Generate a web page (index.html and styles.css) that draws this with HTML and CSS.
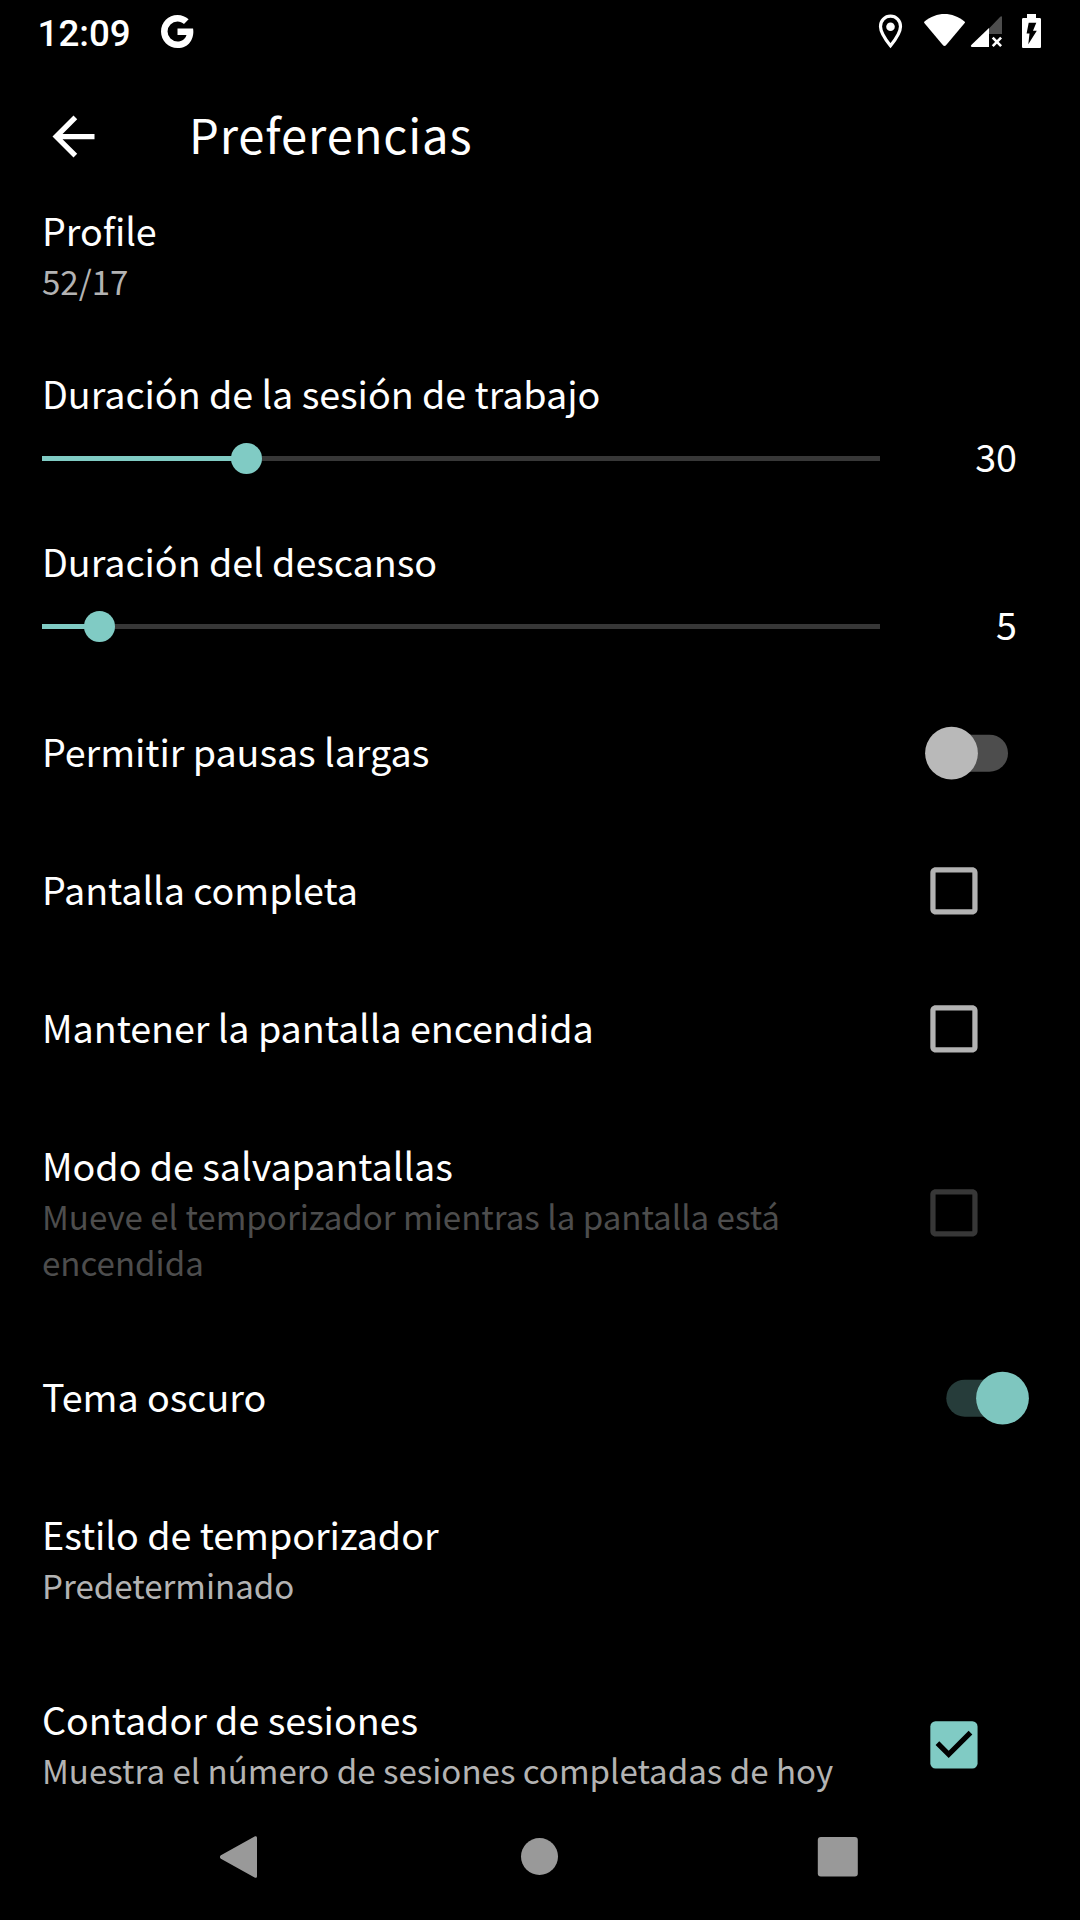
FILE: index.html
```html
<!DOCTYPE html>
<html lang="es">
<head>
<meta charset="utf-8">
<title>Preferencias</title>
<link rel="stylesheet" href="styles.css">
</head>
<body>
<div class="screen">
  <header class="status">
    <span class="clock">12:09</span>
    <svg class="google" viewBox="2.54 2 19.7 20"><path d="M12.545 10.239v3.821h5.445c-.712 2.315-2.647 3.972-5.445 3.972a6.032 6.032 0 1 1 0-12.064c1.498 0 2.866.549 3.921 1.453l2.814-2.814C17.503 2.988 15.139 2 12.545 2 7.021 2 2.543 6.477 2.543 12s4.478 10 10.002 10c8.396 0 10.249-7.850 9.426-11.748z"/></svg>
    <svg class="status-icons" viewBox="876 0 168 63">
      <path d="M890.500 16.200c-5.600 0-10 4.400-10 10.300 0 6.500 6.300 14.700 10 19.300 3.700-4.600 10-12.800 10-19.300 0-5.900-4.400-10.300-10-10.300z" fill="none" stroke="#fff" stroke-width="3.200"/>
      <circle cx="890.500" cy="26.700" r="4.300"/>
      <path d="M924.500 21.500c12-10 28-10 40 0 .6.500.6 1.100.2 1.600L946 45.200c-.8.900-2.200.9-3 0L924.300 23.100c-.4-.500-.3-1.100.2-1.600z"/>
      <path d="M1002 17v17h-13V28.500l11-11.500c.8-.9 2-1 2 0z" fill="#4d4d4d"/>
      <path d="M989 28v19h-17c-1.300 0-1.500-1.200-.7-2z"/>
      <path d="M992.700 37.700l8.400 8.400m0-8.400l-8.400 8.400" stroke="#fff" stroke-width="2.600"/>
      <path d="M1027 14h9v4h3.500c1 0 1.500.5 1.500 1.500v27c0 1-.5 1.500-1.500 1.500h-16c-1 0-1.500-.5-1.500-1.500v-27c0-1 .5-1.500 1.500-1.500h3.500z"/>
      <path d="M1028.700 22.700h7.600l-3.300 8.100h3.800l-8.500 13.500 1.200-10.800h-2.900z" fill="#000"/>
    </svg>
  </header>
  <div class="toolbar">
    <svg class="icon" viewBox="0 0 24 24"><path d="M20 11H7.830l5.590-5.590L12 4l-8 8 8 8 1.410-1.410L7.830 13H20z"/></svg>
    <h1>Preferencias</h1>
  </div>
  <main class="list">
    <div class="row two-line">
      <div class="text"><div class="title">Profile</div><div class="summary">52/17</div></div>
    </div>
    <div class="slider-row">
      <div class="title">Duración de la sesión de trabajo</div>
      <div class="slider-line">
        <div class="slider"><div class="fill" style="width: 204.500px"></div><div class="thumb"></div></div>
        <div class="value">30</div>
      </div>
    </div>
    <div class="slider-row">
      <div class="title">Duración del descanso</div>
      <div class="slider-line">
        <div class="slider"><div class="fill" style="width: 57.500px"></div><div class="thumb"></div></div>
        <div class="value">5</div>
      </div>
    </div>
    <div class="row">
      <div class="text"><div class="title">Permitir pausas largas</div></div>
      <svg class="switch" viewBox="0 0 104 54"><rect x="21.300" y="8.700" width="61.700" height="37" rx="18.500" fill="#4d4d4d"/><circle cx="26.500" cy="27.200" r="26.400" fill="#b9b9b9"/></svg>
    </div>
    <div class="row">
      <div class="text"><div class="title">Pantalla completa</div></div>
      <svg class="check" viewBox="-.17 -.17 24.380 24.380"><path d="M19 5v14H5V5h14m0-2H5c-1.100 0-2 .9-2 2v14c0 1.100.9 2 2 2h14c1.100 0 2-.9 2-2V5c0-1.100-.9-2-2-2z"/></svg>
    </div>
    <div class="row">
      <div class="text"><div class="title">Mantener la pantalla encendida</div></div>
      <svg class="check" viewBox="-.17 -.17 24.380 24.380"><path d="M19 5v14H5V5h14m0-2H5c-1.100 0-2 .9-2 2v14c0 1.100.9 2 2 2h14c1.100 0 2-.9 2-2V5c0-1.100-.9-2-2-2z"/></svg>
    </div>
    <div class="row three-line">
      <div class="text"><div class="title">Modo de salvapantallas</div><div class="summary disabled">Mueve el temporizador mientras la pantalla está encendida</div></div>
      <svg class="check check-disabled" viewBox="-.17 -.17 24.380 24.380"><path d="M19 5v14H5V5h14m0-2H5c-1.100 0-2 .9-2 2v14c0 1.100.9 2 2 2h14c1.100 0 2-.9 2-2V5c0-1.100-.9-2-2-2z"/></svg>
    </div>
    <div class="row">
      <div class="text"><div class="title">Tema oscuro</div></div>
      <svg class="switch" viewBox="0 0 104 54"><rect x="21.300" y="8.700" width="61.700" height="37" rx="18.500" fill="#263c3a"/><circle cx="77.500" cy="27.200" r="26.400" fill="#7ec6bf"/></svg>
    </div>
    <div class="row two-line">
      <div class="text"><div class="title">Estilo de temporizador</div><div class="summary">Predeterminado</div></div>
    </div>
    <div class="row two-line last">
      <div class="text"><div class="title">Contador de sesiones</div><div class="summary">Muestra el número de sesiones completadas de hoy</div></div>
      <svg class="check check-on" viewBox="-.17 -.17 24.380 24.380"><rect x="3" y="3" width="18" height="18" rx="2"/><path d="M10 17l-5-5 1.410-1.410L10 14.170l7.590-7.590L19 8z" fill="#000"/></svg>
    </div>
  </main>
  <nav class="navbar">
    <svg viewBox="0 0 44 44"><path d="M38 1.800v38.400c0 1.400-1.200 2.100-2.400 1.300L1.900 22.700c-1.300-.8-1.300-2.600 0-3.400L35.600.5c1.200-.8 2.400-.1 2.400 1.300z"/></svg>
    <svg viewBox="0 0 44 44"><circle cx="21.500" cy="20.500" r="18.500"/></svg>
    <svg viewBox="0 0 44 44"><rect x="1.800" y="1" width="40" height="39.600" rx="3"/></svg>
  </nav>
</div>
</body>
</html>
```
FILE: styles.css
```css
* { box-sizing: border-box; }

body {
  margin: 0;
  background: #000;
  color: #fff;
  font-family: "Noto Sans CJK SC", sans-serif;
}

svg { display: block; flex: none; fill: #fff; }

.screen {
  display: flex;
  flex-direction: column;
  width: 1080px;
  height: 1920px;
  overflow: hidden;
}

.status {
  display: flex;
  align-items: center;
  flex: none;
  height: 63px;
  padding: 0 36px 0 37.500px;
}

.clock { width: 123.500px; padding-top: 5px; font: 500 36.750px/1 Roboto, sans-serif; }
.google { width: 32.500px; height: 33px; }
.status-icons { width: 168px; height: 63px; margin-left: auto; }

.icon { width: 63px; height: 63px; }

.toolbar {
  display: flex;
  align-items: center;
  flex: none;
  height: 100.500px;
  padding: 46.500px 0 0 42px;
}

h1 {
  margin: 0 0 0 84px;
  padding-bottom: 5px;
  font-size: 47.200px;
  font-weight: 400;
  line-height: 54px;
  letter-spacing: .85px;
}

.list { flex: 1; min-height: 0; overflow: hidden; }

.row {
  display: flex;
  align-items: center;
  justify-content: space-between;
  height: 138px;
  padding: 0 51px 0 42px;
}

.two-line { height: 184.500px; }
.three-line { height: 231px; }
.last { height: 186px; }
.text { width: 800px; }

.title {
  padding-bottom: 6px;
  font-size: 37.700px;
  line-height: 47px;
  letter-spacing: -.06px;
  white-space: nowrap;
}

.summary {
  margin: -1px 0 1px;
  font-size: 33.100px;
  line-height: 46px;
  color: #b3b3b3;
}

.disabled { color: #4d4d4d; }

.slider-row { height: 168px; padding: 20px 63px 0 42px; }
.slider-row .title { height: 59px; padding: 4px 0 0; line-height: 41px; }

.slider-line {
  display: flex;
  align-items: center;
  justify-content: space-between;
  height: 63px;
}

.slider {
  display: flex;
  align-items: center;
  width: 838px;
  height: 5px;
  background: #373737;
}

.fill { height: 5px; background: #80cbc4; }
.thumb { flex: none; width: 31px; height: 31px; margin-left: -15.500px; border-radius: 50%; background: #80cbc4; }
.value { padding-bottom: 6px; font-size: 37.700px; line-height: 47px; }

.switch { width: 104px; height: 54px; }
.check { width: 64px; height: 64px; margin-right: 43px; fill: #b3b3b3; }
.check-disabled { margin-bottom: 1px; fill: #373737; }
.check-on { fill: #80cbc4; }

.navbar {
  display: flex;
  align-items: center;
  justify-content: space-between;
  flex: none;
  height: 126px;
  padding: 2px 220px 0 219px;
}

.navbar svg { width: 44px; height: 44px; fill: #999; }
```
